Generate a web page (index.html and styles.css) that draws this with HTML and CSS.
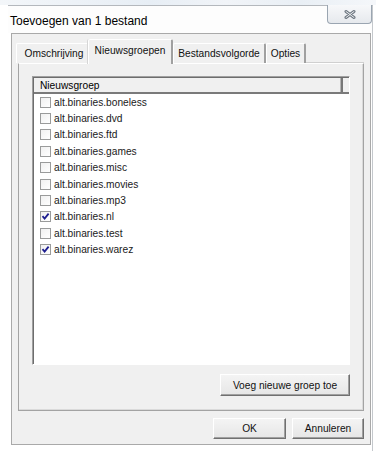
FILE: index.html
```html
<!DOCTYPE html>
<html>
<head>
<meta charset="utf-8">
<link rel="stylesheet" href="styles.css">
</head>
<body>
<div class="strip"></div>
<div class="window">
  <div class="titlebar">
    <span class="title">Toevoegen van 1 bestand</span>
    <div class="close">
      <svg width="12" height="9" viewBox="0 0 12 9">
        <path d="M2 1.5 L10 7.5 M10 1.5 L2 7.5" stroke="#6f7882" stroke-width="3" stroke-linecap="round" fill="none"/>
        <path d="M2 1.5 L10 7.5 M10 1.5 L2 7.5" stroke="#eef0f2" stroke-width="1" stroke-linecap="round" fill="none"/>
      </svg>
    </div>
  </div>
  <div class="panel">
    <div class="tabs">
      <div class="tab t1">Omschrijving</div>
      <div class="tab active">Nieuwsgroepen</div>
      <div class="tab t3">Bestandsvolgorde</div>
      <div class="tab t4">Opties</div>
    </div>
    <div class="page">
      <div class="list">
        <div class="header">
          <div class="hcol">Nieuwsgroep</div>
          <div class="hrest"></div>
        </div>
        <div class="rows">
          <div class="row"><span class="cb"></span><span>alt.binaries.boneless</span></div>
          <div class="row"><span class="cb"></span><span>alt.binaries.dvd</span></div>
          <div class="row"><span class="cb"></span><span>alt.binaries.ftd</span></div>
          <div class="row"><span class="cb"></span><span>alt.binaries.games</span></div>
          <div class="row"><span class="cb"></span><span>alt.binaries.misc</span></div>
          <div class="row"><span class="cb"></span><span>alt.binaries.movies</span></div>
          <div class="row"><span class="cb"></span><span>alt.binaries.mp3</span></div>
          <div class="row"><span class="cb checked"><svg width="9" height="9" viewBox="0 0 9 9"><path d="M1.5 4.2 L3.6 6.6 L7.6 1.6" stroke="#1d1d8f" stroke-width="1.8" fill="none"/></svg></span><span>alt.binaries.nl</span></div>
          <div class="row"><span class="cb"></span><span>alt.binaries.test</span></div>
          <div class="row"><span class="cb checked"><svg width="9" height="9" viewBox="0 0 9 9"><path d="M1.5 4.2 L3.6 6.6 L7.6 1.6" stroke="#1d1d8f" stroke-width="1.8" fill="none"/></svg></span><span>alt.binaries.warez</span></div>
        </div>
      </div>
      <div class="pagebtns">
        <button class="btn add">Voeg nieuwe groep toe</button>
      </div>
    </div>
    <div class="footer">
      <button class="btn ok">OK</button>
      <button class="btn cancel">Annuleren</button>
    </div>
  </div>
</div>
</body>
</html>
```

FILE: styles.css
```css
* { box-sizing: border-box; }
html, body {
  margin: 0;
  padding: 0;
  background: #ffffff;
  font-family: "Liberation Sans", Arial, sans-serif;
  color: #000;
}
.strip {
  height: 5px;
  background: linear-gradient(90deg, #f3f6f9 0%, #e7eef5 40%, #f1f4f8 60%, #e9eff5 80%, #f5f7fa 100%);
}
.window {
  margin-left: 8px;
  width: 365px;
  height: 446px;
  border-top: 1px solid #b4b8bd;
  border-right: 1px solid #c4c8cc;
  display: flex;
  flex-direction: column;
  box-shadow: 0 1px 0 #bdbdbd, 0 2px 0 #9a9a9a;
}
.titlebar {
  height: 27px;
  display: flex;
  align-items: flex-start;
  background: #fdfdfd;
}
.title {
  font-size: 12px;
  margin-left: 2px;
  margin-top: 8px;
  line-height: 14px;
}
.close {
  margin-left: auto;
  margin-top: -1px;
  width: 45px;
  height: 19px;
  border: 1px solid #9aa5b1;
  border-top: none;
  border-radius: 0 0 4px 4px;
  background: linear-gradient(#f7f8fa, #e6e9ed);
  display: flex;
  align-items: center;
  justify-content: center;
}
.close svg { display: block; }
.panel {
  margin-left: 3px;
  width: 360px;
  height: 412px;
  border: 1px solid #a9a9a9;
  background: #f0f0f0;
  display: flex;
  flex-direction: column;
}
.tabs {
  display: flex;
  align-items: flex-end;
  margin-top: 5px;
  padding-left: 4px;
  height: 24px;
  position: relative;
  z-index: 2;
}
.tab {
  font-size: 10.2px;
  height: 20px;
  line-height: 20px;
  padding: 0;
  text-align: center;
  white-space: nowrap;
  border-top: 1px solid #ffffff;
  border-left: 1px solid #ffffff;
  border-right: 2px solid #a0a0a0;
  border-radius: 2px 2px 0 0;
  background: #f0f0f0;
  color: #111;
}
.t1 { width: 74px; padding-left: 3px; }
.t3 { width: 93px; }
.t4 { width: 40px; }
.tab.active {
  width: 85px;
  margin-left: -2px;
  margin-bottom: -1px;
  height: 25px;
  line-height: 21px;
  border-left: 1px solid #ffffff;
  box-shadow: -1px 0 0 #d6d6d6;
  position: relative;
  z-index: 3;
}
.page {
  margin: 0 6px;
  height: 348px;
  border: 1px solid #a3a3a3;
  border-top-color: #ffffff;
  box-shadow: inset -1px -1px 0 #dadada, 0 -1px 0 #d0d0d0;
  padding: 12px 13px 0 13px;
  display: flex;
  flex-direction: column;
}
.list {
  height: 289px;
  background: #ffffff;
  border-top: 1px solid #a0a0a0;
  border-left: 1px solid #a0a0a0;
  border-right: 1px solid #ffffff;
  border-bottom: 1px solid #ffffff;
  box-shadow: inset 1px 1px 0 #6d6d6d;
  display: flex;
  flex-direction: column;
  padding: 1px 0 0 1px;
}
.header {
  display: flex;
  height: 16px;
  background: #f0f0f0;
  border-bottom: 2px solid #7a7a7a;
  font-size: 10.2px;
}
.hcol {
  width: 309px;
  padding-left: 6px;
  line-height: 15px;
  border-right: 2px solid #777;
  box-shadow: inset -1px 0 0 #b5b5b5;
}
.hrest { flex: 1; }
.rows {
  display: flex;
  flex-direction: column;
}
.row {
  height: 16.4px;
  display: flex;
  align-items: center;
  padding-left: 6px;
  font-size: 10.2px;
  color: #1a1a1a;
}
.cb {
  width: 11px;
  height: 11px;
  border: 1px solid #9a9b9b;
  background: linear-gradient(135deg, #f0f0f0, #ffffff);
  margin-right: 3px;
  display: flex;
  align-items: center;
  justify-content: center;
}
.cb svg { display: block; }
.pagebtns {
  display: flex;
  justify-content: flex-end;
  margin-top: 9px;
}
.btn {
  font-family: "Liberation Sans", Arial, sans-serif;
  font-size: 10.2px;
  color: #111;
  background: linear-gradient(#f4f4f4, #e6e6e6);
  border: 1px solid #ffffff;
  border-right-color: #707070;
  border-bottom-color: #707070;
  box-shadow: inset -1px -1px 0 #a0a0a0;
  padding: 0;
  margin: 0;
}
.add {
  width: 130px;
  height: 22px;
}
.footer {
  display: flex;
  justify-content: flex-end;
  gap: 6px;
  padding: 7px 6px 0 0;
}
.ok, .cancel {
  width: 72px;
  height: 21px;
}
.ok { width: 73px; }
```
